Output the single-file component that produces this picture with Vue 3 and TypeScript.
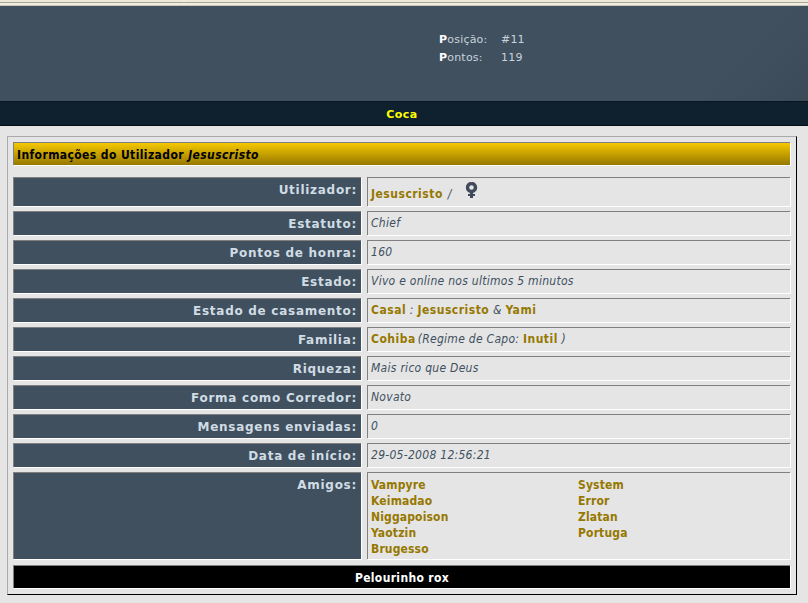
<script setup lang="ts">
interface Row {
  label: string;
  kind: string;
  text?: string;
}

const rows: Row[] = [
  { label: 'Utilizador:', kind: 'user' },
  { label: 'Estatuto:', kind: 'text', text: 'Chief' },
  { label: 'Pontos de honra:', kind: 'text', text: '160' },
  { label: 'Estado:', kind: 'text', text: 'Vivo e online nos ultimos 5 minutos' },
  { label: 'Estado de casamento:', kind: 'married' },
  { label: 'Familia:', kind: 'family' },
  { label: 'Riqueza:', kind: 'text', text: 'Mais rico que Deus' },
  { label: 'Forma como Corredor:', kind: 'text', text: 'Novato' },
  { label: 'Mensagens enviadas:', kind: 'text', text: '0' },
  { label: 'Data de início:', kind: 'text', text: '29-05-2008 12:56:21' },
];

const friends = ['Vampyre', 'System', 'Keimadao', 'Error', 'Niggapoison', 'Zlatan', 'Yaotzin', 'Portuga', 'Brugesso'];
</script>

<template>
  <div class="page">
    <div class="chrome">
      <div class="tab"></div>
      <div class="tab grow"></div>
    </div>
    <header class="banner">
      <div class="stats">
        <span class="stat-label"><b>P</b>osição:</span><span class="stat-value">#11</span>
        <span class="stat-label"><b>P</b>ontos:</span><span class="stat-value">119</span>
      </div>
    </header>
    <nav class="nav">Coca</nav>
    <main class="card">
      <h1 class="title">Informações do Utilizador <em>Jesuscristo</em></h1>
      <div class="table">
        <template v-for="(row, i) in rows" :key="row.label">
          <div class="label" :class="{ first: i === 0 }">{{ row.label }}</div>
          <div class="value" :class="{ first: i === 0 }">
            <div v-if="row.kind === 'user'" class="user">
              <a>Jesuscristo</a>
              <span class="slash">/</span>
              <svg class="gender" width="13" height="16" viewBox="0 0 13 16">
                <circle cx="6.5" cy="5.5" r="4" fill="none" stroke="#3f4a5c" stroke-width="3.4" />
                <path d="M5 10h3v2h2v2h-2v2h-3v-2h-2v-2h2z" fill="#3f4a5c" />
                <rect x="5" y="0" width="2" height="1" fill="#8a3a6a" />
              </svg>
            </div>
            <template v-else-if="row.kind === 'married'"><a>Casal</a> : <a>Jesuscristo</a> &amp; <a>Yami</a></template>
            <template v-else-if="row.kind === 'family'"><a>Cohiba</a><span class="regime">(Regime de Capo: <a>Inutil</a> )</span></template>
            <template v-else>{{ row.text }}</template>
          </div>
        </template>
        <div class="label friends-label">Amigos:</div>
        <div class="value friends">
          <a v-for="name in friends" :key="name">{{ name }}</a>
        </div>
      </div>
      <div class="footer-bar">Pelourinho rox</div>
    </main>
  </div>
</template>

<style>
html,
body {
  margin: 0;
  background: #e5e5e5;
}
</style>

<style scoped>
.page {
  height: 603px;
  overflow: hidden;
  background: #e5e5e5;
  font-family: "DejaVu Sans", Verdana, sans-serif;
  font-size: 11px;
}

.chrome {
  display: flex;
  gap: 2px;
  height: 6px;
  background: linear-gradient(#a8a594 0 1px, #f1efe4 1px 3px, #c9c6b6 3px);
  background-position: 0 2px;
  background-repeat: no-repeat;
  background-color: #f1efe4;
}

.tab {
  width: 183px;
  height: 2px;
  background: #ece9da;
}

.grow {
  flex: 1;
  width: auto;
}

.banner {
  display: flex;
  height: 95px;
  box-sizing: border-box;
  padding: 27px 0 0 439px;
  background: linear-gradient(135deg, #40505f 88%, #3c4a58);
}

.stats {
  display: grid;
  grid-template-columns: 62px auto;
  grid-auto-rows: 18px;
  letter-spacing: 0.2px;
  color: #c8d2dc;
}

.stat-label b {
  color: #fff;
}

.nav {
  height: 25px;
  box-sizing: border-box;
  padding-right: 4px;
  line-height: 25px;
  text-align: center;
  font-weight: bold;
  letter-spacing: 0.5px;
  color: #ffff00;
  background: #0f202e;
  border-top: 1px solid #0a1520;
  border-bottom: 1px solid #050d14;
}

.card {
  width: 790px;
  height: 459px;
  box-sizing: border-box;
  margin: 10px 0 0 7px;
  padding: 5px 6px 0 5px;
  border: 1px solid;
  border-color: #aaa #000 #000 #aaa;
}

.title {
  height: 23px;
  margin: 0;
  box-sizing: border-box;
  padding-left: 3px;
  line-height: 24px;
  font-size: 12px;
  font-weight: bold;
  font-stretch: condensed;
  letter-spacing: 0.4px;
  color: #000;
  background: linear-gradient(#f5c800, #967800);
  border-top: 1px solid #808080;
  border-left: 1px solid #808080;
  box-shadow: 1px 1px 0 #fff;
}

.table {
  display: grid;
  grid-template-columns: 348px 423px;
  column-gap: 6px;
  row-gap: 5px;
  margin-top: 12px;
}

.label,
.value {
  box-sizing: border-box;
  height: 24px;
  border-top: 1px solid #808080;
  border-left: 1px solid #808080;
  box-shadow: 1px 1px 0 #fff;
}

.label {
  padding-right: 4px;
  line-height: 25px;
  text-align: right;
  font-size: 12px;
  font-weight: bold;
  letter-spacing: 0.72px;
  color: #d0dce4;
  background: #40505f;
}

.value {
  padding-left: 3px;
  line-height: 23px;
  font-size: 12px;
  font-style: italic;
  font-stretch: condensed;
  letter-spacing: 0.28px;
  color: #40505f;
}

.first {
  height: 29px;
}

.value a {
  font-style: normal;
  font-weight: bold;
  letter-spacing: 0.5px;
  color: #967800;
}

.user {
  display: flex;
  align-items: flex-start;
}

.user a,
.slash {
  margin-top: 5px;
}

.slash {
  margin-left: 5px;
}

.gender {
  margin: 4px 0 0 13px;
}

.regime {
  margin-left: 2px;
}

.friends-label,
.friends {
  height: 87px;
}

.friends {
  display: grid;
  grid-template-columns: 207px 208px;
  grid-auto-rows: 16px;
  padding-top: 4px;
  font-style: normal;
}

.friends a {
  line-height: 16px;
  letter-spacing: 0.15px;
}

.footer-bar {
  height: 23px;
  box-sizing: border-box;
  margin-top: 6px;
  line-height: 24px;
  text-align: center;
  font-size: 12px;
  font-weight: bold;
  font-stretch: condensed;
  letter-spacing: 0.35px;
  color: #fff;
  background: #000;
  border-top: 1px solid #808080;
  border-left: 1px solid #808080;
  box-shadow: 1px 1px 0 #fff;
}
</style>
